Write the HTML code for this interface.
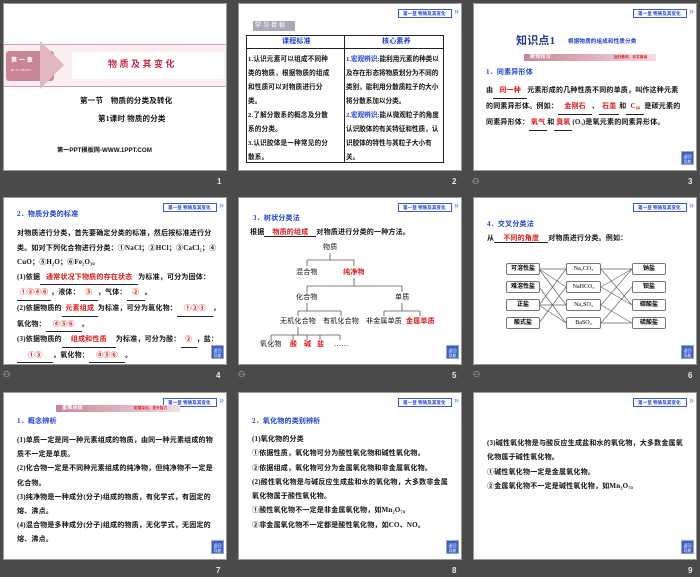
<!DOCTYPE html>
<html><head><meta charset="utf-8"><style>
*{margin:0;padding:0;box-sizing:border-box}
body{width:700px;height:577px;background:#4a4a4a;position:relative;overflow:hidden;font-family:"Liberation Serif","Noto Sans CJK SC",sans-serif;}
.s{position:absolute;width:224px;height:168px;background:#fff;border:1px solid #9a9a9a;overflow:hidden}
.t{position:absolute;font-size:7px;font-weight:bold;color:#111;white-space:nowrap;line-height:1;letter-spacing:0.2px}
.b{color:#1b3fd1}
.r{color:#e01818}
.tag{position:absolute;left:159px;top:5px;width:54px;height:9px;border:1px solid #3a5bd0;background:#fff;font-size:4.6px;color:#1b3fd1;font-weight:bold;line-height:7px;padding-left:4px;white-space:nowrap;letter-spacing:0;font-family:"Liberation Sans","Noto Sans CJK SC",sans-serif}
.tag:after{content:"»";position:absolute;right:-8px;top:-2px;font-size:9px;color:#8aa0e0}
.btn{position:absolute;left:207px;top:147px;width:13px;height:14px;background:#3b5fc8;border:1px solid #9ab;color:#fff;font-size:4px;line-height:5px;text-align:center;padding-top:2px;font-family:"Liberation Sans","Noto Sans CJK SC",sans-serif}
.num{position:absolute;color:#e8e8e8;font:bold 8px "Liberation Sans",sans-serif}
.ic{position:absolute;color:#ddd;font-size:8px}
.u{display:inline-block;border-bottom:1px solid #222;text-align:center}
.bx{position:absolute;border:1px solid #777;border-radius:2px;height:12px;font-size:6px;font-weight:bold;text-align:center;line-height:11px;background:#fff}
.n{font-weight:normal}
</style></head><body>

<!-- slide 1 -->
<div class="s" style="left:3px;top:3px">
  <div style="position:absolute;left:0;top:40px;width:224px;height:43px;background:#fbeef0;border-top:1px solid #d99aa8;border-bottom:1px solid #d99aa8"></div>
  <div style="position:absolute;left:2px;top:47px;width:48px;height:30px;background:#c88595;border-radius:3px"></div>
  <div style="position:absolute;left:36px;top:37px;width:0;height:0;border-top:24px solid transparent;border-bottom:24px solid transparent;border-left:24px solid #e3b7c1"></div>
  <div class="t" style="left:7px;top:54px;color:#fff;font-size:6px">第 一 章</div>
  <div class="t" style="left:7px;top:65px;color:#fff;font-size:3px;font-weight:normal">DI YI ZHANG</div>
  <div style="position:absolute;left:68px;top:48px;width:152px;height:27px;background:#fff;border-radius:3px"></div>
  <div class="t" style="left:104px;top:56px;color:#c0304a;font-size:9px;letter-spacing:2.5px">物质及其变化</div>
  <div class="t" style="left:76px;top:93px;font-size:7.5px">第一节　物质的分类及转化</div>
  <div class="t" style="left:94px;top:111px;font-size:7.5px">第1课时 物质的分类</div>
  <div class="t" style="left:53px;top:144px;font-size:6.2px;letter-spacing:0;font-family:'Liberation Sans','Noto Sans CJK SC',sans-serif">第一PPT模板网-WWW.1PPT.COM</div>
</div>
<div class="num" style="left:217px;top:177px">1</div>

<!-- slide 2 -->
<div class="s" style="left:238px;top:3px">
  <div class="tag">第一章 物质及其变化</div>
  <div style="position:absolute;left:14px;top:17px;width:42px;height:10px;background:#a9a9b8;color:#eee;font-size:6px;font-weight:bold;line-height:10px;letter-spacing:2px;padding-left:2px">学习目标</div>
  <div style="position:absolute;left:7px;top:31px;width:198px;height:128px;border:1px solid #222"></div>
  <div style="position:absolute;left:7px;top:44px;width:198px;border-top:1px solid #222"></div>
  <div style="position:absolute;left:105px;top:31px;height:128px;border-left:1px solid #222"></div>
  <div class="t b" style="left:43px;top:34px">课程标准</div>
  <div class="t b" style="left:143px;top:34px">核心素养</div>
  <div class="t" style="left:9px;top:49px;line-height:14px;font-size:6.6px">1.认识元素可以组成不同种<br>类的物质，根据物质的组成<br>和性质可以对物质进行分<br>类。<br>2.了解分散系的概念及分散<br>系的分类。<br>3.认识胶体是一种常见的分<br>散系。</div>
  <div class="t" style="left:107px;top:49px;line-height:14px;font-size:6.6px;letter-spacing:0"><span class="b">1.宏观辨识:</span>能利用元素的种类以<br>及存在形态将物质划分为不同的<br>类别，能利用分散质粒子的大小<br>将分散系加以分类。<br><span class="b">2.宏观辨识:</span>能从微观粒子的角度<br>认识胶体的有关特征和性质，认<br>识胶体的特性与其粒子大小有<br>关。</div>
</div>
<div class="num" style="left:452px;top:177px">2</div>

<!-- slide 3 -->
<div class="s" style="left:473px;top:3px">
  <div class="tag">第一章 物质及其变化</div>
  <div class="t" style="left:42px;top:32px;font-size:11px;color:#2a3a8a">知识点1</div>
  <div class="t b" style="left:94px;top:36px;font-size:5.5px">根据物质的组成和性质分类</div>
  <div style="position:absolute;left:50px;top:50px;width:132px;height:7px;background:linear-gradient(90deg,#c88595,#f3dde2)"></div>
  <div class="t" style="left:56px;top:51px;color:#fff;font-size:5px">新知预习</div>
  <div class="t r" style="left:140px;top:52px;font-size:3.5px">回归教材，夯实基础</div>
  <div class="t b" style="left:12px;top:65px">1．同素异形体</div>
  <div class="t" style="left:12px;top:79px;line-height:15px">由<span class="u" style="width:34px"><span class="r">同一种</span></span>元素形成的几种性质不同的单质，叫作这种元素<br>的同素异形体。例如：<span class="u" style="width:34px"><span class="r">金刚石</span></span>、<span class="u" style="width:20px"><span class="r">石墨</span></span>和<span class="u" style="width:18px"><span class="r">C₆₀</span></span>是碳元素的<br>同素异形体：<span class="u" style="width:18px"><span class="r">氧气</span></span>和<span class="u" style="width:18px"><span class="r">臭氧</span></span>(O₃)是氧元素的同素异形体。</div>
  <div class="btn">返回<br>导航</div>
</div>
<div class="ic" style="left:472px;top:177px">⚇</div>
<div class="num" style="left:688px;top:177px">3</div>

<!-- slide 4 -->
<div class="s" style="left:3px;top:197px">
  <div class="tag">第一章 物质及其变化</div>
  <div class="t b" style="left:13px;top:13px">2．物质分类的标准</div>
  <div class="t" style="left:13px;top:28px;line-height:14.6px">对物质进行分类，首先要确定分类的标准，然后按标准进行分<br>类。如对下列化合物进行分类：①NaCl；②HCl；③CaCl₂；④<br>CuO；⑤H₂O；⑥Fe₂O₃。<br>(1)依据<span class="u" style="width:98px"><span class="r">通常状况下物质的存在状态</span></span>为标准，可分为固体：<br><span class="u" style="width:34px"><span class="r">①③④⑥</span></span>，液体：<span class="u" style="width:18px"><span class="r">⑤</span></span>，气体：<span class="u" style="width:18px"><span class="r">②</span></span>。<br>(2)依据物质的<span class="u" style="width:36px"><span class="r">元素组成</span></span>为标准，可分为氯化物：<span class="u" style="width:36px"><span class="r">①②③</span></span>，<br>氧化物：<span class="u" style="width:36px"><span class="r">④⑤⑥</span></span>。<br>(3)依据物质的<span class="u" style="width:54px"><span class="r">组成和性质</span></span>为标准，可分为酸：<span class="u" style="width:16px"><span class="r">②</span></span>，盐：<br><span class="u" style="width:36px"><span class="r">①③</span></span>，氧化物：<span class="u" style="width:36px"><span class="r">④⑤⑥</span></span>。</div>
  <div class="btn">返回<br>导航</div>
</div>
<div class="ic" style="left:3px;top:370px">⚇</div>
<div class="num" style="left:216px;top:371px">4</div>

<!-- slide 5 -->
<div class="s" style="left:238px;top:197px">
  <div class="tag">第一章 物质及其变化</div>
  <div class="t b" style="left:14px;top:17px">3．树状分类法</div>
  <div class="t" style="left:11px;top:31px">根据<span class="u" style="width:52px"><span class="r">物质的组成</span></span>对物质进行分类的一种方法。</div>
  <svg style="position:absolute;left:0;top:0" width="224" height="168" stroke="#555" stroke-width="0.8" fill="none">
    <path d="M91 55V62M68 62H115M68 62V68M115 62V68"/>
    <path d="M115 80V88M68 88H163M68 88V94M163 88V94"/>
    <path d="M68 105V113M59 113H102M59 113V118M102 113V118"/>
    <path d="M163 105V113M145 113H181M145 113V118M181 113V118"/>
    <path d="M59 129V137M32 137H101M32 137V142M54 137V142M68 137V142M81 137V142M101 137V142"/>
  </svg>
  <div class="t n" style="left:84px;top:46px">物质</div>
  <div class="t n" style="left:57px;top:71px">混合物</div>
  <div class="t r" style="left:104px;top:71px">纯净物</div>
  <div class="t n" style="left:57px;top:96px">化合物</div>
  <div class="t n" style="left:156px;top:96px">单质</div>
  <div class="t n" style="left:41px;top:120px">无机化合物</div>
  <div class="t n" style="left:84px;top:120px">有机化合物</div>
  <div class="t n" style="left:127px;top:120px">非金属单质</div>
  <div class="t r" style="left:167px;top:120px">金属单质</div>
  <div class="t n" style="left:21px;top:143px">氧化物</div>
  <div class="t r" style="left:51px;top:143px">酸</div>
  <div class="t r" style="left:65px;top:143px">碱</div>
  <div class="t r" style="left:78px;top:143px">盐</div>
  <div class="t n" style="left:95px;top:143px">……</div>
  <div class="btn">返回<br>导航</div>
</div>
<div class="ic" style="left:238px;top:370px">⚇</div>
<div class="num" style="left:452px;top:371px">5</div>

<!-- slide 6 -->
<div class="s" style="left:473px;top:197px">
  <div class="tag">第一章 物质及其变化</div>
  <div class="t b" style="left:13px;top:23px">4．交叉分类法</div>
  <div class="t" style="left:13px;top:37px">从<span class="u" style="width:54px"><span class="r">不同的角度</span></span>对物质进行分类。例如：</div>
  <svg style="position:absolute;left:0;top:0" width="224" height="168" stroke="#666" stroke-width="0.7">
    <path d="M65 71L92 71M65 71L92 89M65 71L92 107M65 89L92 125M65 107L92 71M65 107L92 107M65 107L92 125M65 125L92 89"/>
    <path d="M127 71L158 71M127 71L158 107M127 89L158 71M127 89L158 107M127 107L158 71M127 107L158 125M127 125L158 89M127 125L158 125"/>
  </svg>
  <div class="bx" style="left:32px;top:65px;width:34px">可溶性盐</div>
  <div class="bx" style="left:32px;top:83px;width:34px">难溶性盐</div>
  <div class="bx" style="left:32px;top:101px;width:34px">正盐</div>
  <div class="bx" style="left:32px;top:119px;width:34px">酸式盐</div>
  <div class="bx n" style="left:92px;top:65px;width:35px">Na₂CO₃</div>
  <div class="bx n" style="left:92px;top:83px;width:35px">NaHCO₃</div>
  <div class="bx n" style="left:92px;top:101px;width:35px">Na₂SO₄</div>
  <div class="bx n" style="left:92px;top:119px;width:35px">BaSO₄</div>
  <div class="bx" style="left:158px;top:65px;width:34px">钠盐</div>
  <div class="bx" style="left:158px;top:83px;width:34px">钡盐</div>
  <div class="bx" style="left:158px;top:101px;width:34px">碳酸盐</div>
  <div class="bx" style="left:158px;top:119px;width:34px">硫酸盐</div>
  <div class="btn">返回<br>导航</div>
</div>
<div class="ic" style="left:473px;top:370px">⚇</div>
<div class="num" style="left:688px;top:371px">6</div>

<!-- slide 7 -->
<div class="s" style="left:3px;top:392px">
  <div class="tag">第一章 物质及其变化</div>
  <div style="position:absolute;left:52px;top:12px;width:124px;height:7px;background:linear-gradient(90deg,#c88595,#f3dde2)"></div>
  <div class="t" style="left:58px;top:13px;color:#fff;font-size:5px">重难点拨</div>
  <div class="t r" style="left:130px;top:14px;font-size:3.5px">拓展深化，提升能力</div>
  <div class="t b" style="left:13px;top:25px">1．概念辨析</div>
  <div class="t" style="left:13px;top:40px;line-height:14.2px">(1)单质一定是同一种元素组成的物质，由同一种元素组成的物<br>质不一定是单质。<br>(2)化合物一定是不同种元素组成的纯净物，但纯净物不一定是<br>化合物。<br>(3)纯净物是一种成分(分子)组成的物质，有化学式，有固定的<br>熔、沸点。<br>(4)混合物是多种成分(分子)组成的物质，无化学式，无固定的<br>熔、沸点。</div>
  <div class="btn">返回<br>导航</div>
</div>
<div class="num" style="left:216px;top:566px">7</div>

<!-- slide 8 -->
<div class="s" style="left:238px;top:392px">
  <div class="tag">第一章 物质及其变化</div>
  <div class="t b" style="left:13px;top:25px">2．氧化物的类别辨析</div>
  <div class="t" style="left:13px;top:39px;line-height:14.3px">(1)氧化物的分类<br>①依据性质，氧化物可分为酸性氧化物和碱性氧化物。<br>②依据组成，氧化物可分为金属氧化物和非金属氧化物。<br>(2)酸性氧化物是与碱反应生成盐和水的氧化物，大多数非金属<br>氧化物属于酸性氧化物。<br>①酸性氧化物不一定是非金属氧化物，如Mn₂O₇。<br>②非金属氧化物不一定都是酸性氧化物，如CO、NO。</div>
  <div class="btn">返回<br>导航</div>
</div>
<div class="num" style="left:452px;top:566px">8</div>

<!-- slide 9 -->
<div class="s" style="left:473px;top:392px">
  <div class="tag">第一章 物质及其变化</div>
  <div class="t" style="left:13px;top:43px;line-height:14.3px">(3)碱性氧化物是与酸反应生成盐和水的氧化物，大多数金属氧<br>化物属于碱性氧化物。<br>①碱性氧化物一定是金属氧化物。<br>②金属氧化物不一定是碱性氧化物，如Mn₂O₇。</div>
  <div class="btn">返回<br>导航</div>
</div>
<div class="num" style="left:688px;top:566px">9</div>

</body></html>
